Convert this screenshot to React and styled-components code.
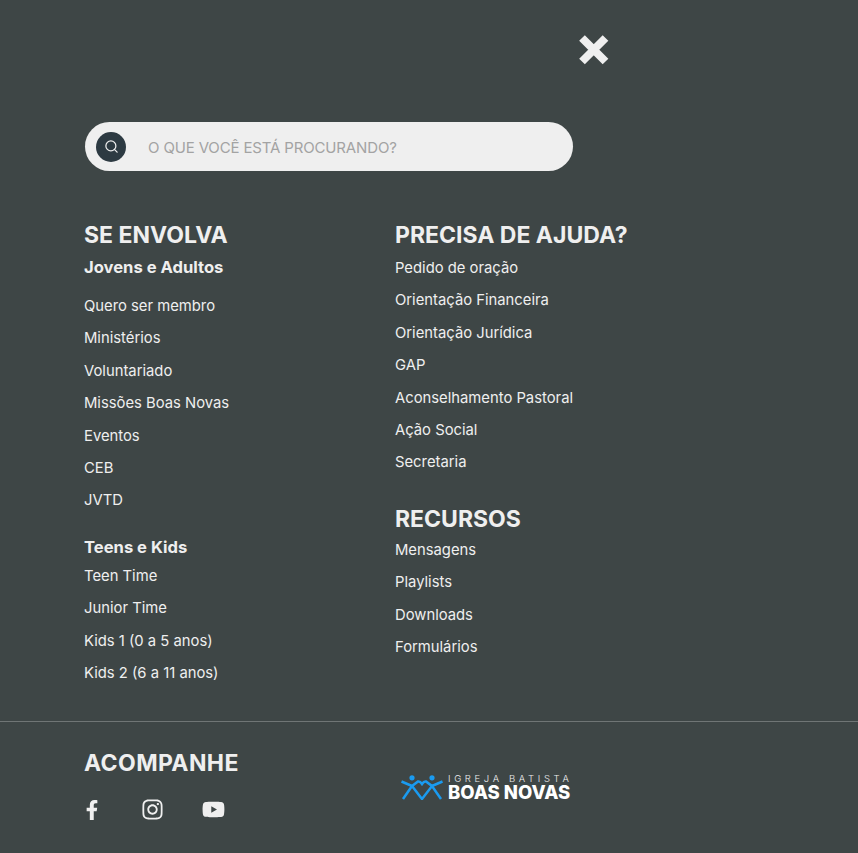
import React from 'react'
import styled, { createGlobalStyle } from 'styled-components'
import { FaFacebookF, FaInstagram, FaYoutube } from 'react-icons/fa'
import { FiSearch } from 'react-icons/fi'

const GlobalStyle = createGlobalStyle`
    html, body {
        margin: 0;
        padding: 0;
        background-color: #3e4646;
    }
`

const Page = styled.div`
    width: 858px;
    height: 853px;
    overflow: hidden;
    background-color: #3e4646;
    color: #efefef;
    font-family: Inter, 'Noto Sans', sans-serif;
`

const TopBar = styled.div`
    display: flex;
    justify-content: flex-end;
    width: 610px;
    height: 122px;
    padding: 34px 0 0 84px;
    box-sizing: border-box;
`

const CloseButton = styled.button`
    display: block;
    width: 32px;
    height: 32px;
    padding: 0;
    border: none;
    background: none;
    cursor: pointer;
`

const SearchBar = styled.div`
    display: flex;
    align-items: center;
    width: 488px;
    height: 49px;
    margin-left: 85px;
    padding-left: 11px;
    box-sizing: border-box;
    border-radius: 25px;
    background-color: #efefef;
`

const SearchIcon = styled.span`
    display: flex;
    align-items: center;
    justify-content: center;
    width: 30px;
    height: 30px;
    border-radius: 50%;
    background-color: #2d3a42;
    color: #efefef;
    font-size: 15px;
`

const Placeholder = styled.span`
    margin: 2px 0 0 22px;
    color: #a3a3a3;
    font-size: 15px;
    letter-spacing: -0.15px;
`

const Columns = styled.div`
    display: grid;
    grid-template-columns: 311px 1fr;
    height: 550px;
    padding: 50px 0 0 84px;
    box-sizing: border-box;
`

const Column = styled.div`
    display: flex;
    flex-direction: column;
`

const Heading = styled.h2`
    margin: ${(props) => props.$top || 0}px 0 ${(props) => props.$bottom ?? 3}px;
    color: #efefef;
    font-size: 23px;
    font-weight: 700;
    line-height: 28px;
    letter-spacing: ${(props) => props.$spacing || 0}px;
`

const SubHeading = styled.h3`
    margin: ${(props) => props.$top || 0}px 0 ${(props) => props.$bottom || 0}px;
    color: #efefef;
    font-size: 16.6px;
    font-weight: 700;
    line-height: 22px;
`

const LinkList = styled.ul`
    margin: 0;
    padding: 0;
    list-style: none;
`

const LinkItem = styled.li`
    height: 32.4px;
    color: #efefef;
    font-size: 14.8px;
    line-height: 32.4px;
    white-space: nowrap;
`

const Footer = styled.footer`
    display: grid;
    grid-template-columns: 317px 1fr;
    height: 132px;
    padding: 27px 0 0 84px;
    box-sizing: border-box;
    border-top: 1px solid #6f7575;
`

const SocialRow = styled.div`
    display: flex;
    align-items: center;
    gap: 44.5px;
    margin-top: 21px;
`

const SocialIcon = styled.a`
    display: flex;
    justify-content: center;
    width: 16px;
    color: #efefef;
    font-size: ${(props) => props.$size}px;

    & svg {
        flex-shrink: 0;
    }
`

const Logo = styled.div`
    display: flex;
    align-items: center;
    gap: 5px;
    margin-top: 23px;
    height: 30px;
`

const LogoText = styled.div`
    display: flex;
    flex-direction: column;
`

const LogoTop = styled.span`
    font-size: 9.5px;
    font-weight: 300;
    line-height: 10px;
    letter-spacing: 3.65px;
    white-space: nowrap;
`

const LogoBottom = styled.span`
    font-size: 18.5px;
    font-weight: 800;
    line-height: 17px;
    white-space: nowrap;
    color: #fff;
`

const CloseIcon = () => (
    <svg width="32" height="32" viewBox="0 0 32 32">
        <path d="M4 4 L27.5 27.5 M27.5 4 L4 27.5" stroke="#efefef" strokeWidth="8" />
    </svg>
)

const LogoMark = () => (
    <svg width="42" height="25" viewBox="0 0 42 25" fill="none" stroke="#1a9bf0" strokeWidth="2.5">
        <circle cx="11" cy="2.8" r="2.6" fill="#1a9bf0" stroke="none" />
        <circle cx="31" cy="2.8" r="2.6" fill="#1a9bf0" stroke="none" />
        <path d="M0.5 6.5 L11 11 L17 6.5 Q19 6 21 9 Q23 6 25 6.5 L31 11 L41.5 6.5" />
        <path d="M11 11 L2 24 M11 11 L21 24 L31 11 L40 24" />
    </svg>
)

const involve = ['Quero ser membro', 'Ministérios', 'Voluntariado', 'Missões Boas Novas', 'Eventos', 'CEB', 'JVTD']
const kids = ['Teen Time', 'Junior Time', 'Kids 1 (0 a 5 anos)', 'Kids 2 (6 a 11 anos)']
const help = ['Pedido de oração', 'Orientação Financeira', 'Orientação Jurídica', 'GAP', 'Aconselhamento Pastoral', 'Ação Social', 'Secretaria']
const resources = ['Mensagens', 'Playlists', 'Downloads', 'Formulários']

const Links = ({ items }) => (
    <LinkList>
        {items.map((item) => (
            <LinkItem key={item}>{item}</LinkItem>
        ))}
    </LinkList>
)

const App = () => (
    <Page>
        <GlobalStyle />
        <TopBar>
            <CloseButton aria-label="Fechar">
                <CloseIcon />
            </CloseButton>
        </TopBar>
        <SearchBar>
            <SearchIcon>
                <FiSearch />
            </SearchIcon>
            <Placeholder>O QUE VOCÊ ESTÁ PROCURANDO?</Placeholder>
        </SearchBar>
        <Columns>
            <Column>
                <Heading>SE ENVOLVA</Heading>
                <SubHeading $top={4} $bottom={12}>Jovens e Adultos</SubHeading>
                <Links items={involve} />
                <SubHeading $top={19} $bottom={2}>Teens e Kids</SubHeading>
                <Links items={kids} />
            </Column>
            <Column>
                <Heading>PRECISA DE AJUDA?</Heading>
                <Links items={help} />
                <Heading $top={26} $bottom={1}>RECURSOS</Heading>
                <Links items={resources} />
            </Column>
        </Columns>
        <Footer>
            <div>
                <Heading $spacing={0.4}>ACOMPANHE</Heading>
                <SocialRow>
                    <SocialIcon $size={20}><FaFacebookF /></SocialIcon>
                    <SocialIcon $size={23}><FaInstagram /></SocialIcon>
                    <SocialIcon $size={23}><FaYoutube /></SocialIcon>
                </SocialRow>
            </div>
            <Logo>
                <LogoMark />
                <LogoText>
                    <LogoTop>IGREJA BATISTA</LogoTop>
                    <LogoBottom>BOAS NOVAS</LogoBottom>
                </LogoText>
            </Logo>
        </Footer>
    </Page>
)

export default App
